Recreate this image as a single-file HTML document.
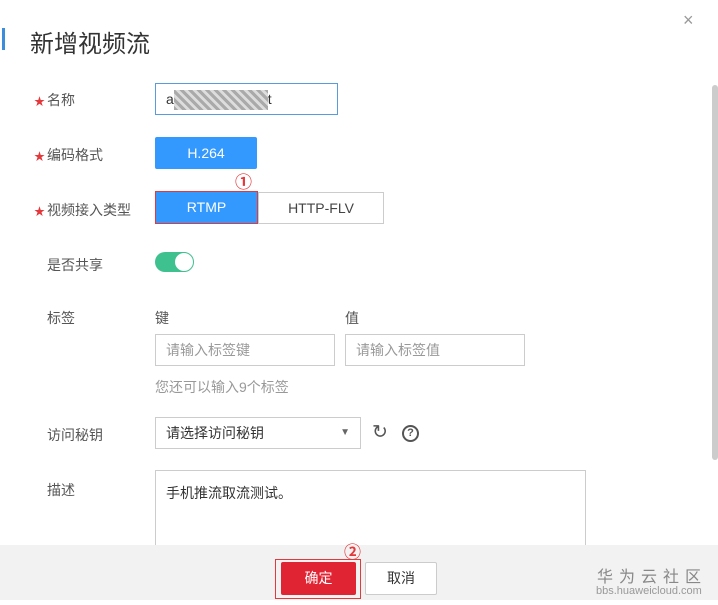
<!DOCTYPE html>
<html><head><meta charset="utf-8"><style>
*{margin:0;padding:0;box-sizing:border-box}
body{width:718px;height:605px;background:#fff;position:relative;overflow:hidden;font-family:"Liberation Sans","Noto Sans CJK SC",sans-serif;font-size:14px;color:#333}
.a{position:absolute}
.lbl{position:absolute;left:34px;font-size:14px;color:#555}
.st{color:#e4393c;margin-right:2px;font-size:11px}
.inp{position:absolute;border:1px solid #ccc;background:#fff;font-size:14px;color:#999;padding-left:10px}
</style></head><body>
<div class="a" style="left:2px;top:28px;width:3px;height:22px;background:#3c8ddc"></div>
<div class="a" style="left:30px;top:24px;font-size:24px;color:#333">新增视频流</div>
<div class="a" style="left:683px;top:10px;font-size:18px;color:#999">×</div>

<div class="lbl" style="top:90px"><span class="st">★</span>名称</div>
<div class="inp" style="left:155px;top:83px;width:183px;height:32px;border-color:#5a9be0;color:#333;line-height:30px">a<span style="display:inline-block;width:94px;height:20px;vertical-align:middle;background:repeating-linear-gradient(45deg,#aaa 0 3px,#ddd 3px 6px)"></span>t</div>

<div class="lbl" style="top:145px"><span class="st">★</span>编码格式</div>
<div class="a" style="left:155px;top:137px;width:102px;height:32px;background:#3399ff;color:#fff;text-align:center;line-height:32px;border-radius:2px">H.264</div>
<div class="a" style="left:235px;top:168px;color:#e4393c;font-size:17px;font-weight:bold">①</div>

<div class="lbl" style="top:200px"><span class="st">★</span>视频接入类型</div>
<div class="a" style="left:155px;top:191px;width:103px;height:33px;background:#3399ff;color:#fff;text-align:center;line-height:31px;border:1px solid #e4393c">RTMP</div>
<div class="a" style="left:258px;top:192px;width:126px;height:32px;border:1px solid #ccc;color:#444;text-align:center;line-height:30px">HTTP-FLV</div>

<div class="lbl" style="top:255px;left:47px">是否共享</div>
<div class="a" style="left:155px;top:252px;width:38px;height:20px;background:#3fc08f;border-radius:10px"></div>
<div class="a" style="left:174px;top:252px;width:20px;height:20px;background:#fff;border:1px solid #3fc08f;border-radius:10px"></div>

<div class="lbl" style="top:308px;left:47px">标签</div>
<div class="a" style="left:155px;top:308px;color:#555">键</div>
<div class="a" style="left:345px;top:308px;color:#555">值</div>
<div class="inp" style="left:155px;top:334px;width:180px;height:32px;line-height:30px">请输入标签键</div>
<div class="inp" style="left:345px;top:334px;width:180px;height:32px;line-height:30px">请输入标签值</div>
<div class="a" style="left:155px;top:377px;color:#999">您还可以输入9个标签</div>

<div class="lbl" style="top:425px;left:47px">访问秘钥</div>
<div class="inp" style="left:155px;top:417px;width:206px;height:32px;line-height:30px;color:#333">请选择访问秘钥<span class="a" style="right:10px;top:0;font-size:10px;color:#666">▼</span></div>
<div class="a" style="left:372px;top:421px;font-size:19px;color:#555">↻</div>
<div class="a" style="left:402px;top:425px;width:17px;height:17px;border:2px solid #555;border-radius:50%;font-size:11px;font-weight:bold;text-align:center;line-height:13px;color:#555">?</div>

<div class="lbl" style="top:480px;left:47px">描述</div>
<div class="inp" style="left:155px;top:470px;width:431px;height:90px;color:#333;padding-top:12px">手机推流取流测试。</div>

<div class="a" style="left:0;top:545px;width:718px;height:55px;background:#f2f2f2"></div>
<div class="a" style="left:712px;top:85px;width:6px;height:375px;background:#ccc;border-radius:3px"></div>
<div class="a" style="left:344px;top:538px;color:#e4393c;font-size:17px;font-weight:bold">②</div>
<div class="a" style="left:275px;top:559px;width:86px;height:40px;border:1px solid #e4393c"></div>
<div class="a" style="left:281px;top:562px;width:75px;height:33px;background:#e02434;color:#fff;text-align:center;line-height:33px;border-radius:2px">确定</div>
<div class="a" style="left:365px;top:562px;width:72px;height:33px;background:#fff;border:1px solid #ccc;text-align:center;line-height:31px;border-radius:2px">取消</div>
<div class="a" style="left:597px;top:563px;font-size:16px;color:#888;letter-spacing:6px">华为云社区</div>
<div class="a" style="left:596px;top:585px;font-size:11px;color:#999">bbs.huaweicloud.com</div>
</body></html>
